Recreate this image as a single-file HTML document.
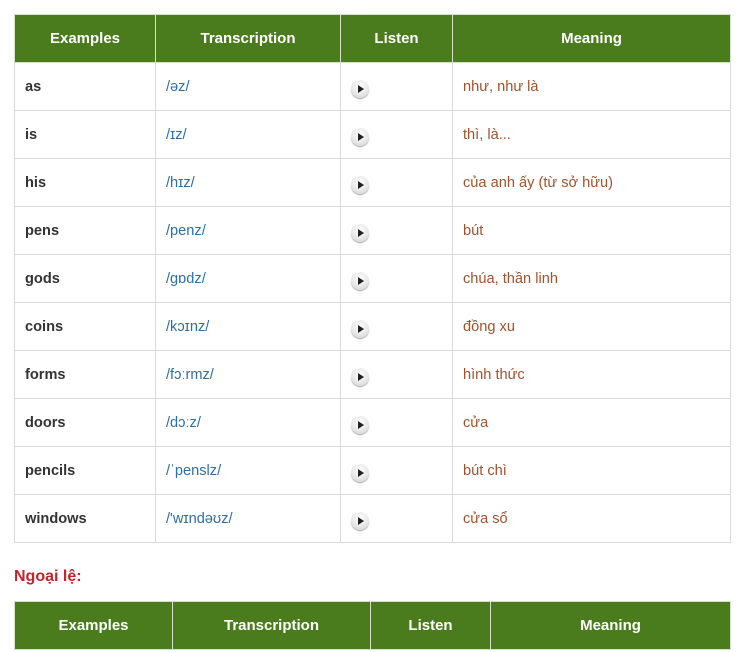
<!DOCTYPE html>
<html><head><meta charset="utf-8"><style>
body{margin:0;background:#fff;font-family:"Liberation Sans",Arial,sans-serif;font-size:14.6px;}
table{border-collapse:collapse;position:absolute;left:14px;table-layout:fixed;}
td,th{border:1px solid #d9d9d9;padding:0 10px;height:48px;box-sizing:border-box;}
th{background:#4a7b1c;color:#fff;font-weight:bold;text-align:center;border-color:#d6e0cc;font-size:15px}
td.w{font-weight:bold;color:#333;}
td.t{color:#2c6ea8;}
td.m{color:#a0522d;}
.b{display:inline-block;width:18px;height:18px;border-radius:50%;background:radial-gradient(circle at 50% 35%,#fff,#e6e6e6 60%,#c8c8c8);box-shadow:0 1px 1px #aaa;position:relative;vertical-align:middle;margin-top:5px}
.b:after{content:"";position:absolute;left:7px;top:5px;border-left:6px solid #222;border-top:4px solid transparent;border-bottom:4px solid transparent;}
h4{position:absolute;left:14px;top:568px;margin:0;color:#c0262c;font-size:16px;font-weight:bold}
</style></head><body>
<table style="top:14px;width:717px">
<colgroup><col style="width:141px"><col style="width:185px"><col style="width:112px"><col></colgroup>
<tr><th>Examples</th><th>Transcription</th><th>Listen</th><th>Meaning</th></tr>
<tr><td class="w">as</td><td class="t">/əz/</td><td><span class="b"></span></td><td class="m">như, như là</td></tr>
<tr><td class="w">is</td><td class="t">/ɪz/</td><td><span class="b"></span></td><td class="m">thì, là...</td></tr>
<tr><td class="w">his</td><td class="t">/hɪz/</td><td><span class="b"></span></td><td class="m">của anh ấy (từ sở hữu)</td></tr>
<tr><td class="w">pens</td><td class="t">/penz/</td><td><span class="b"></span></td><td class="m">bút</td></tr>
<tr><td class="w">gods</td><td class="t">/gɒdz/</td><td><span class="b"></span></td><td class="m">chúa, thần linh</td></tr>
<tr><td class="w">coins</td><td class="t">/kɔɪnz/</td><td><span class="b"></span></td><td class="m">đồng xu</td></tr>
<tr><td class="w">forms</td><td class="t">/fɔːrmz/</td><td><span class="b"></span></td><td class="m">hình thức</td></tr>
<tr><td class="w">doors</td><td class="t">/dɔːz/</td><td><span class="b"></span></td><td class="m">cửa</td></tr>
<tr><td class="w">pencils</td><td class="t">/ˈpenslz/</td><td><span class="b"></span></td><td class="m">bút chì</td></tr>
<tr><td class="w">windows</td><td class="t">/'wɪndəʊz/</td><td><span class="b"></span></td><td class="m">cửa sổ</td></tr>
</table>
<h4>Ngoại lệ:</h4>
<table style="top:601px;width:717px">
<colgroup><col style="width:158px"><col style="width:198px"><col style="width:120px"><col></colgroup>
<tr><th>Examples</th><th>Transcription</th><th>Listen</th><th>Meaning</th></tr>
</table>
</body></html>
